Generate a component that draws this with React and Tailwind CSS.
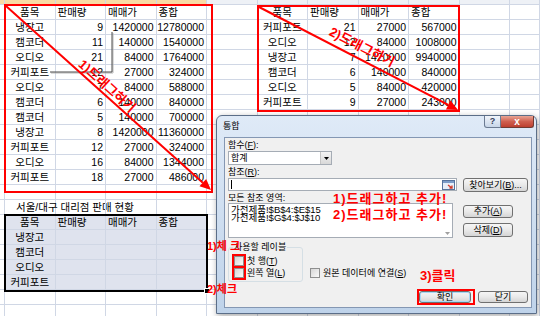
import React from "react"
import clsx from "clsx"

const FONT = "font-['Liberation_Sans','Noto_Sans_CJK_KR',sans-serif]"

const HEAD = ["품목", "판매량", "매매가", "종합"]

const LEFT = [
  ["냉장고", 9, 1420000, 12780000],
  ["캠코더", 11, 140000, 1540000],
  ["오디오", 21, 84000, 1764000],
  ["커피포트", 12, 27000, 324000],
  ["오디오", 7, 84000, 588000],
  ["캠코더", 6, 140000, 840000],
  ["캠코더", 5, 140000, 700000],
  ["냉장고", 8, 1420000, 11360000],
  ["커피포트", 12, 27000, 324000],
  ["오디오", 16, 84000, 1344000],
  ["커피포트", 18, 27000, 486000],
]

const RIGHT = [
  ["커피포트", 21, 27000, 567000],
  ["오디오", 12, 84000, 1008000],
  ["냉장고", 7, 1420000, 9940000],
  ["캠코더", 6, 140000, 840000],
  ["오디오", 5, 84000, 420000],
  ["커피포트", 9, 27000, 243000],
]

const SUMMARY = ["냉장고", "캠코더", "오디오", "커피포트"]

const ROWS = 22
const COLS = 12

const ALIGN = {
  center: "text-center",
  left: "text-left pl-[2px]",
  right: "text-right pr-[2px]",
  title: "text-left pl-[11px]",
}

function buildCells() {
  const cells = {}
  const put = (r, c, text, align) => (cells[`${r}-${c}`] = { text, align })
  HEAD.forEach((h, i) => {
    const align = i === 0 ? "center" : "left"
    put(1, 1 + i, h, align)
    put(1, 6 + i, h, align)
    put(15, 1 + i, h, align)
  })
  LEFT.forEach((row, i) => row.forEach((v, j) => put(2 + i, 1 + j, v, j === 0 ? "center" : "right")))
  RIGHT.forEach((row, i) => row.forEach((v, j) => put(2 + i, 6 + j, v, j === 0 ? "center" : "right")))
  put(14, 1, "서울/대구 대리점 판매 현황", "title")
  SUMMARY.forEach((t, i) => put(16 + i, 1, t, "center"))
  return cells
}

function Sheet() {
  const cells = buildCells()
  const out = []
  for (let r = 0; r < ROWS; r++) {
    for (let c = 0; c < COLS; c++) {
      const cell = cells[`${r}-${c}`]
      const picked = r >= 15 && r <= 19 && c >= 1 && c <= 4
      out.push(
        <div
          key={`${r}-${c}`}
          className={clsx(
            "whitespace-nowrap border-b border-r border-[#d0d7e5] text-[10.5px] leading-[14px] text-black",
            picked && "bg-[#dfe3ee]",
            r === 0 && (c <= 4 ? "bg-[#f9dba5]" : "bg-[#eef1f6]"),
            cell && ALIGN[cell.align]
          )}
        >
          {cell?.text}
        </div>
      )
    }
  }
  return (
    <div className="grid grid-cols-[5px_repeat(10,50.5px)_1fr] grid-rows-[5px_repeat(21,15px)]">
      {out}
    </div>
  )
}

const arrowHead = (x1, y1, x2, y2, len = 11, w = 5) => {
  const a = Math.atan2(y2 - y1, x2 - x1)
  const bx = x2 - len * Math.cos(a)
  const by = y2 - len * Math.sin(a)
  const px = -Math.sin(a) * w
  const py = Math.cos(a) * w
  return { base: [bx, by], pts: `${x2},${y2} ${bx + px},${by + py} ${bx - px},${by - py}` }
}

function Arrows() {
  const a = arrowHead(6, 6, 211, 190)
  const b = arrowHead(259, 7, 458, 110)
  return (
    <svg className="pointer-events-none absolute left-0 top-0" width="540" height="316">
      <polyline points="113,33 113,73 51,73" fill="none" stroke="#b8b8b8" strokeWidth="1" />
      <polyline points="112,32 112,72 50,72" fill="none" stroke="#4a4a4a" strokeWidth="1" />
      <line x1="6" y1="6" x2={a.base[0]} y2={a.base[1]} stroke="#ff0000" strokeWidth="2" />
      <polygon points={a.pts} fill="#ff0000" />
      <line x1="259" y1="7" x2={b.base[0]} y2={b.base[1]} stroke="#ff0000" strokeWidth="2" />
      <polygon points={b.pts} fill="#ff0000" />
    </svg>
  )
}

const BTN =
  "flex items-center justify-center rounded-[3px] border border-[#707070] bg-gradient-to-b from-[#f6f6f6] via-[#e9e9e9] to-[#d5d5d5] text-[9px] leading-none text-black"

const CB = "block h-[10px] w-[10px] border border-[#8e8f8f] bg-gradient-to-br from-[#d6d6d6] to-[#fafafa]"

function Dialog() {
  return (
    <div className="absolute left-[216px] top-[115px] flex h-[199px] w-[321px] flex-col rounded-t-[6px] border border-[#5b6e88] bg-gradient-to-b from-[#dfeaf7] to-[#bfd3ea] shadow-[1px_2px_6px_rgba(0,0,0,0.35)]">
      {/* title bar */}
      <div className="flex h-[21px] shrink-0 items-start">
        <span className="self-center pl-[6px] text-[9px] text-black">통합</span>
        <div className="ml-auto mr-[2px] flex">
          <div className="flex h-[12px] w-[17px] items-center justify-center rounded-bl-[3px] border border-t-0 border-[#6c7b92] bg-gradient-to-b from-[#f1f5fb] to-[#c8d6e8] text-[9px] font-bold leading-none text-[#34405a]">
            ?
          </div>
          <div className="flex h-[12px] w-[33px] items-center justify-center rounded-br-[3px] border border-l-0 border-t-0 border-[#6f3a32] bg-gradient-to-b from-[#e8a595] via-[#cf5f4f] to-[#bd3f2f] text-[10px] font-bold leading-none text-white">
            x
          </div>
        </div>
      </div>

      {/* body */}
      <div className="mb-[5px] ml-[7px] mr-[4px] flex-1 border border-[#8497b3] bg-[#f0f0f0]">
        <div className="flex flex-col pl-[3px] pt-[2px] text-[9px] text-black">
          <div className="h-[11px] leading-[11px]">
            함수(<span className="underline">F</span>):
          </div>
          <div className="flex h-[14px] w-[104px] border border-[#a5acb5] bg-white">
            <span className="flex-1 pl-[2px] leading-[12px]">합계</span>
            <span className="flex w-[11px] items-center justify-center border-l border-[#c5c5c5] bg-gradient-to-b from-[#f4f4f4] to-[#d8d8d8]">
              <svg width="5" height="3" viewBox="0 0 5 3">
                <polygon points="0,0 5,0 2.5,3" fill="#000" />
              </svg>
            </span>
          </div>
          <div className="h-[13px] leading-[14px]">
            참조(<span className="underline">R</span>):
          </div>
          <div className="flex h-[14px] items-start">
            <div className="flex h-[13px] w-[229px] items-center border border-[#a5acb5] bg-white pl-[2px]">
              <span className="h-[9px] w-px bg-black" />
              <svg className="ml-auto mr-[1px]" width="13" height="10" viewBox="0 0 13 10">
                <rect x="0.5" y="0.5" width="12" height="9" fill="#e6eef8" stroke="#55729c" />
                <rect x="1" y="1" width="11" height="2" fill="#7b9bc8" />
                <path d="M6 5 L10 8 M10 5.5 L10 8 L7.5 8" stroke="#d03a2a" strokeWidth="1.3" fill="none" />
              </svg>
            </div>
            <div className={`${BTN} ml-[6px] h-[14px] w-[65px]`}>
              찾아보기(<span className="underline">B</span>)...
            </div>
          </div>
          <div className="h-[11px] leading-[12px]">모든 참조 영역:</div>
          <div className="flex h-[35px]">
            <div className="flex h-[35px] w-[225px] border border-[#a5acb5] bg-white">
              <div className="flex-1 pl-[2px] pt-[2px] text-[9.5px] leading-[8px]">
                <div>가전제품!$B$4:$E$15</div>
                <div>가전제품!$G$4:$J$10</div>
              </div>
              <div className="flex w-[9px] flex-col items-center justify-end pb-[2px]">
                <svg width="5" height="3" viewBox="0 0 5 3">
                  <polygon points="0,0 5,0 2.5,3" fill="#a0a0a0" />
                </svg>
              </div>
            </div>
            <div className="ml-[10px] flex flex-col">
              <div className={`${BTN} mt-[2px] h-[13px] w-[50px]`}>
                추가(<span className="underline">A</span>)
              </div>
              <div className={`${BTN} mt-[5px] h-[14px] w-[50px]`}>
                삭제(<span className="underline">D</span>)
              </div>
            </div>
          </div>
          <div className="mt-[4px] flex items-start">
            <fieldset className="h-[40px] w-[75px] rounded-[3px] border border-[#d5dfe5] pl-[3px] pt-[2px]">
              <legend className="ml-[1px] px-[1px] text-[9px] leading-[10px]">사용할 레이블</legend>
              <div className="flex items-center gap-[1px]">
                <span className="border-2 border-[#ff0000]">
                  <span className={CB} />
                </span>
                <span className="leading-[10px]">
                  첫 행(<span className="underline">T</span>)
                </span>
              </div>
              <div className="-mt-[2px] flex items-center gap-[1px]">
                <span className="border-2 border-[#ff0000]">
                  <span className={CB} />
                </span>
                <span className="leading-[10px]">
                  왼쪽 열(<span className="underline">L</span>)
                </span>
              </div>
            </fieldset>
            <div className="ml-[7px] mt-[26px] flex items-center gap-[3px]">
              <span className={CB} />
              <span className="leading-[10px]">
                원본 데이터에 연결(<span className="underline">S</span>)
              </span>
            </div>
          </div>
          <div className="mt-[7px] flex items-center justify-end pr-[3px]">
            <div className="h-[16px] w-[58px] border-2 border-[#ff0000]">
              <div className={`${BTN} h-[12px] w-[52px] border-[#3c7fb1] shadow-[inset_0_0_0_1px_#a7d8f5]`}>확인</div>
            </div>
            <div className={`${BTN} ml-[3px] h-[12px] w-[50px]`}>닫기</div>
          </div>
        </div>
      </div>
    </div>
  )
}

function Notes() {
  const note = "absolute whitespace-nowrap font-bold leading-none text-[#ff0000]"
  return (
    <>
      <div className={`${note} left-[107px] top-[86px] -translate-x-1/2 -translate-y-1/2 rotate-[42deg] text-[13px]`}>
        1)드래그하기
      </div>
      <div className={`${note} left-[362px] top-[47px] -translate-x-1/2 -translate-y-1/2 rotate-[27deg] text-[13px]`}>
        2)드래그하기
      </div>
      <div className={`${note} left-[333px] top-[192px] text-[13px] tracking-[1px]`}>1)드래그하고 추가!</div>
      <div className={`${note} left-[333px] top-[208px] text-[13px] tracking-[1px]`}>2)드래그하고 추가!</div>
      <div className={`${note} left-[420px] top-[269px] text-[13px]`}>3)클릭</div>
      <div className={`${note} left-[207px] top-[241px] text-[11px]`}>1)체 크</div>
      <div className={`${note} left-[207px] top-[284px] text-[11px]`}>2)체크</div>
    </>
  )
}

export default function App() {
  return (
    <div className={`relative h-[316px] w-[540px] overflow-hidden bg-white ${FONT}`}>
      <Sheet />
      {/* drag ranges */}
      <div className="absolute left-[4px] top-[4px] h-[189px] w-[209px] border-2 border-[#ff0000]" />
      <div className="absolute left-[257px] top-[5px] h-[107px] w-[203px] border-2 border-[#ff0000]" />
      {/* selection */}
      <div className="absolute left-[4px] top-[214px] h-[78px] w-[204px] border-2 border-black" />
      <div className="absolute left-[204px] top-[288px] h-[6px] w-[6px] border border-white bg-black" />
      <Arrows />
      <Dialog />
      <Notes />
    </div>
  )
}
